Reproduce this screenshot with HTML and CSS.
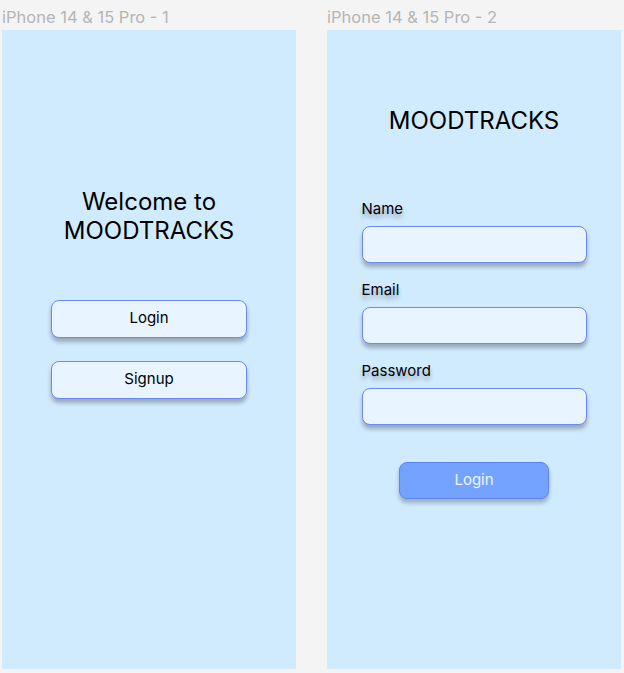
FILE: index.html
```html
<!DOCTYPE html>
<html>
<head>
<meta charset="utf-8">
<link rel="stylesheet" href="styles.css">
</head>
<body>
<div class="canvas">
  <div class="col">
    <div class="frame-name">iPhone 14 &amp; 15 Pro - 1</div>
    <div class="frame frame-welcome">
      <h1 class="welcome">Welcome to<br>MOODTRACKS</h1>
      <div class="btns">
        <button class="btn">Login</button>
        <button class="btn">Signup</button>
      </div>
    </div>
  </div>
  <div class="col">
    <div class="frame-name">iPhone 14 &amp; 15 Pro - 2</div>
    <div class="frame frame-login">
      <h1 class="brand">MOODTRACKS</h1>
      <div class="form">
        <div class="field">
          <label class="label">Name</label>
          <div class="input"></div>
        </div>
        <div class="field">
          <label class="label">Email</label>
          <div class="input"></div>
        </div>
        <div class="field">
          <label class="label">Password</label>
          <div class="input"></div>
        </div>
      </div>
      <button class="primary">Login</button>
    </div>
  </div>
</div>
</body>
</html>
```
FILE: styles.css
```css
html, body {
  margin: 0;
  padding: 0;
  background: #f4f4f4;
  font-family: Inter, "Noto Sans", sans-serif;
}
.canvas {
  display: flex;
  gap: 31px;
  padding-left: 2px;
}
.col {
  width: 294px;
  display: flex;
  flex-direction: column;
}
.frame-name {
  height: 30px;
  box-sizing: border-box;
  padding-top: 8px;
  font-size: 16.5px;
  line-height: 19px;
  color: #b5b5b5;
  white-space: nowrap;
}
.frame {
  height: 639px;
  background: #d0eafe;
  box-sizing: border-box;
  display: flex;
  flex-direction: column;
  align-items: center;
}
.frame-welcome {
  padding-top: 157px;
}
.welcome {
  margin: 0;
  font-weight: 400;
  font-size: 24px;
  line-height: 29px;
  text-align: center;
  color: #000;
}
.btns {
  margin-top: 55px;
  display: flex;
  flex-direction: column;
  gap: 23px;
}
.btn {
  width: 196px;
  height: 38px;
  box-sizing: border-box;
  border: 1px solid #6b8af5;
  border-radius: 8px;
  background: #e8f4ff;
  box-shadow: 0 4px 4px rgba(0, 0, 0, 0.28);
  font-family: Inter, "Noto Sans", sans-serif;
  font-size: 15px;
  line-height: 18px;
  color: #000;
  padding: 0 0 2px;
}
.frame-login {
  padding-top: 76px;
}
.brand {
  margin: 0;
  font-weight: 400;
  font-size: 24px;
  line-height: 29px;
  color: #000;
}
.form {
  margin-top: 65px;
  width: 225px;
  display: flex;
  flex-direction: column;
  gap: 18px;
}
.field {
  display: flex;
  flex-direction: column;
  gap: 9px;
}
.label {
  font-size: 15px;
  line-height: 17px;
  color: #000;
  text-shadow: 0 4px 4px rgba(0, 0, 0, 0.3);
}
.input {
  height: 37px;
  box-sizing: border-box;
  border: 1px solid #6b8af5;
  border-radius: 8px;
  background: #e8f4ff;
  box-shadow: 0 4px 4px rgba(0, 0, 0, 0.28);
}
.primary {
  margin-top: 37px;
  width: 150px;
  height: 37px;
  box-sizing: border-box;
  border: 1px solid #5f85f5;
  border-radius: 8px;
  background: #74a3ff;
  box-shadow: 0 4px 4px rgba(0, 0, 0, 0.25);
  font-family: Inter, "Noto Sans", sans-serif;
  font-size: 15px;
  line-height: 18px;
  color: #eef4ff;
  padding: 0 0 1px;
}
```
